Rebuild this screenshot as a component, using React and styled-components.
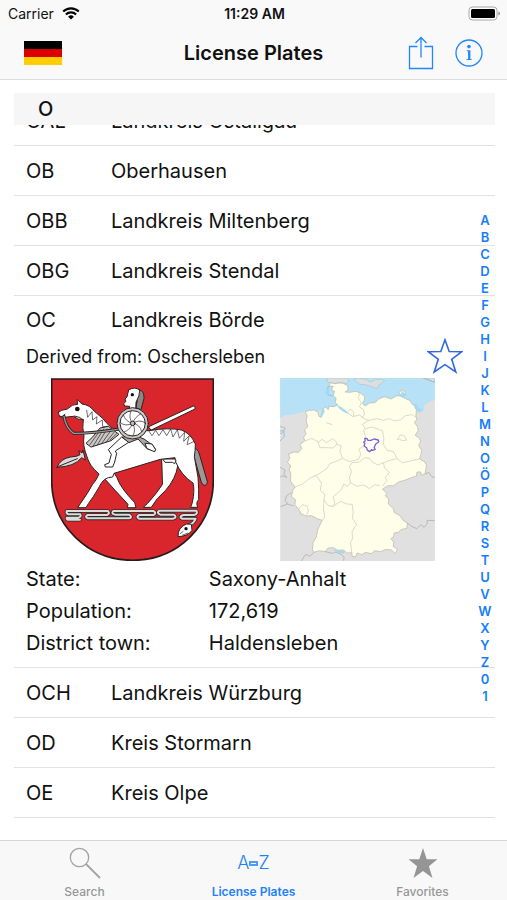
import React from 'react';
import styled, { createGlobalStyle, css } from 'styled-components';

const INDEX = 'ABCDEFGHIJKLMNOÖPQRSTUVWXYZ01'.split('');

const rowsBefore = [
  { code: 'OB', name: 'Oberhausen' },
  { code: 'OBB', name: 'Landkreis Miltenberg' },
  { code: 'OBG', name: 'Landkreis Stendal' },
];

const rowsAfter = [
  { code: 'OCH', name: 'Landkreis Würzburg' },
  { code: 'OD', name: 'Kreis Stormarn' },
  { code: 'OE', name: 'Kreis Olpe' },
];

const facts = [
  { label: 'State:', value: 'Saxony-Anhalt' },
  { label: 'Population:', value: '172,619' },
  { label: 'District town:', value: 'Haldensleben' },
];

const Plate = ({ code, name }) => (
  <PlateButton type="button">
    <Code>{code}</Code>
    <span>{name}</span>
  </PlateButton>
);

const App = () => {
  return (
    <Screen>
      <GlobalStyle />
      <Header>
        <StatusBar>
          <Carrier>
            Carrier
            <WifiIcon />
          </Carrier>
          <Clock>11:29 AM</Clock>
          <StatusRight>
            <BatteryIcon />
          </StatusRight>
        </StatusBar>
        <NavBar>
          <FlagButton type="button" aria-label="Country">
            <Stripe $color="#000" />
            <Stripe $color="#dd0000" />
            <Stripe $color="#ffce00" />
          </FlagButton>
          <Title>License Plates</Title>
          <NavActions>
            <IconButton type="button" aria-label="Share">
              <ShareIcon />
            </IconButton>
            <IconButton type="button" aria-label="Info">
              <InfoIcon />
            </IconButton>
          </NavActions>
        </NavBar>
      </Header>

      <Content>
        <SectionHeader>O</SectionHeader>
        <List>
          <ClippedItem>
            <Plate code="OAL" name="Landkreis Ostallgäu" />
          </ClippedItem>
          {rowsBefore.map((row) => (
            <Item key={row.code}>
              <Plate {...row} />
            </Item>
          ))}
          <Item>
            <OpenPlate type="button" aria-expanded="true">
              <Code>OC</Code>
              <span>Landkreis Börde</span>
            </OpenPlate>
            <Derived>
              <span>Derived from: Oschersleben</span>
              <IconButton type="button" aria-label="Add to favorites">
                <StarOutline />
              </IconButton>
            </Derived>
            <Figures>
              <Crest />
              <GermanyMap />
            </Figures>
            <Facts>
              {facts.map((fact) => (
                <React.Fragment key={fact.label}>
                  <dt>{fact.label}</dt>
                  <dd>{fact.value}</dd>
                </React.Fragment>
              ))}
            </Facts>
          </Item>
          {rowsAfter.map((row) => (
            <Item key={row.code}>
              <Plate {...row} />
            </Item>
          ))}
        </List>
        <IndexBar aria-label="Index">
          {INDEX.map((letter) => (
            <IndexLink key={letter} href={`#${letter}`}>{letter}</IndexLink>
          ))}
        </IndexBar>
      </Content>

      <TabBar>
        <Tab href="#search">
          <TabIcon><SearchIcon /></TabIcon>
          Search
        </Tab>
        <Tab href="#plates" $active>
          <TabIcon>
            <span>A</span>
            <Dash />
            <span>Z</span>
          </TabIcon>
          License Plates
        </Tab>
        <Tab href="#favorites">
          <TabIcon><StarFilled /></TabIcon>
          Favorites
        </Tab>
      </TabBar>
    </Screen>
  );
};

const WifiIcon = () => (
  <svg width="18" height="13" viewBox="0 0 18 13" fill="none" stroke="#000" strokeWidth="2.1">
    <path d="M1.2 4.6a11 11 0 0 1 15.6 0" />
    <path d="M3.9 7.5a7.2 7.2 0 0 1 10.2 0" />
    <path d="M9 12.6L6.1 9.7a4.1 4.1 0 0 1 5.8 0z" fill="#000" stroke="none" />
  </svg>
);

const BatteryIcon = () => (
  <svg width="33" height="15" viewBox="0 0 33 15">
    <rect x="1" y="1" width="28" height="13" rx="3.5" fill="#fff" stroke="#a5a5a5" />
    <rect x="3" y="3" width="24" height="9" rx="1.5" fill="#000" />
    <path d="M30.5 5.5c1.8.8 1.8 3.2 0 4z" fill="#777" />
  </svg>
);

const ShareIcon = () => (
  <svg width="26" height="34" viewBox="0 0 26 34" fill="none" stroke="#2187fb" strokeWidth="1.3">
    <path d="M9.5 10.5H1.5v22h23v-22h-8" />
    <path d="M13 21.5V2M7.5 7L13 1.5 18.5 7" />
  </svg>
);

const InfoIcon = () => (
  <svg width="28" height="28" viewBox="0 0 28 28" fill="none" stroke="#2187fb" strokeWidth="1.3">
    <circle cx="14" cy="14" r="13" />
    <g fill="#2187fb" stroke="none">
      <circle cx="14" cy="7.6" r="1.8" />
      <path d="M11.7 11.2h3.7v8.8h1.2v1h-5v-1h1.5v-7.8h-1.4z" />
    </g>
  </svg>
);

const StarOutline = () => (
  <svg width="36" height="36" viewBox="0 0 36 36" fill="none" stroke="#2f68e0" strokeWidth="1.6">
    <path d="M18 1.8L22.2 13.5 34.5 13.8 24.7 21.3 28.8 34 18 26.6 7.2 34 11.3 21.3 1.5 13.8 13.8 13.5z" />
  </svg>
);

const StarFilled = () => (
  <svg width="30" height="30" viewBox="0 0 30 30" fill="#959595">
    <path d="M15 0l3.7 11.2H29.5l-8.6 7L24.5 30 15 23 5.5 30l3.6-11.8-8.6-7h10.8z" />
  </svg>
);

const SearchIcon = () => (
  <svg width="32" height="32" viewBox="0 0 32 32" fill="none" stroke="#a3a3a3">
    <circle cx="10.5" cy="10.5" r="9.2" strokeWidth="1.3" />
    <path d="M17 17L31 31" strokeWidth="1.8" />
  </svg>
);

const Crest = () => (
  <svg width="163" height="183" viewBox="33 24 489 549" role="img" aria-label="Coat of arms">
    <path d="M35 27H520V330C520 470 410 571 278 571S35 470 35 330z" fill="#d9262c" stroke="#261b1c" strokeWidth="5" />
    <g fill="#fff" stroke="#2b2324" strokeWidth="3" strokeLinejoin="round" strokeLinecap="round">
      {/* spear */}
      <path d="M326 170L460 108Q468 109 465 117L334 180z" />
      <path d="M51 292Q62 265 92 261Q112 260 120 254L116 242L126 249L129 240L136 270L125 263Q104 290 51 292z" fill="#dcdada" />
      <path d="M56 289L112 266" />
      {/* tail */}
      <path d="M455 237Q472 228 479 255L502 335Q501 347 491 346L484 337L462 260z" fill="#9c9898" />
      {/* far legs */}
      <path d="M190 315L222 308L231 323Q240 352 284 398L288 413H262L264 403Q224 360 190 322z" />
      <path d="M366 267H412L413 288Q408 325 376 362Q350 383 334 412H310L323 400Q350 370 367 344z" />
      {/* body and head */}
      <path d="M55 127L65 121L82 117Q98 101 113 103L111 88L126 102Q150 105 163 124L188 145Q213 179 238 182H327Q385 172 424 180Q452 190 466 222Q466 242 463 260L474 322Q477 360 476 389Q467 397 473 412H452L457 398Q465 360 459 339Q424 316 407 276L405 263L361 268L222 310L218 321Q190 321 178 350Q160 382 145 401L138 413H113L121 401Q144 369 157 344Q170 330 177 312Q148 287 141 260Q127 225 132 199Q126 172 130 148Q113 151 101 139L80 141L65 143Q54 137 55 127z" />
      <circle cx="112" cy="117" r="7" fill="#111" stroke="none" />
      <path d="M58 139Q68 144 75 133M104 138Q122 140 130 151" fill="none" />
      {/* mane and back pattern */}
      <path d="M140 121L143 142L156 125L158 150L171 140L169 162L187 150L188 170L203 169" fill="none" strokeWidth="2" />
      <path d="M326 182L336 197L347 181L357 197L369 179L380 197L392 177L399 201L412 179L418 205L434 187L431 214L448 197L441 224L461 215" fill="none" strokeWidth="2" />
      <path d="M139 219Q158 204 180 174L205 169L237 193L213 212L154 231z" fill="#c9c6c6" />
      <path d="M149 225L181 180M160 227L191 177M172 225L201 177M184 222L211 184M197 218L222 187M211 209L230 191" fill="none" strokeWidth="2" />
      {/* reins */}
      <path d="M72 139Q77 173 101 190Q151 191 233 178" fill="none" strokeWidth="9" />
      <path d="M72 139Q77 173 101 190Q151 191 233 178" fill="none" stroke="#999" strokeWidth="4" />
      {/* rider */}
      <path d="M244 202L205 239L214 253L207 279L194 284L196 291H218L224 276L230 250L226 243L266 217z" />
      <path d="M247 202L267 218L294 207L321 236L345 244Q349 238 337 225L312 207L289 198z" fill="#aaa6a6" />
      <path d="M316 220L336 222L347 239L343 245L322 236z" />
      <path d="M298 59Q313 63 312 85L303 119L289 114z" fill="#8c8888" />
      <path d="M267 59Q285 49 299 60Q300 76 288 97L287 121H267L269 109L254 108L251 101L258 94L255 87L260 82z" />
      <circle cx="277" cy="74" r="5" fill="#111" stroke="none" />
      {/* shield */}
      <circle cx="278" cy="160" r="47" fill="#c9c7c7" />
      <circle cx="278" cy="160" r="38" />
      <path d="M278 160Q264 145 273 123M278 160Q284 140 302 132M278 160Q297 147 315 158M278 160Q301 163 305 185M278 160Q290 180 278 198M278 160Q271 180 252 186M278 160Q256 171 241 158M278 160Q256 155 250 135" fill="none" strokeWidth="2" />
      <circle cx="278" cy="160" r="7" fill="#bbb" />
      {/* belly */}
      <path d="M370 270L375 277H397L404 281L408 272" />
    </g>
    {/* ground ornament */}
    <g fill="none" strokeLinecap="round" strokeLinejoin="round">
      <path d="M120 449H85Q79 448 80 443H114Q125 441 121 433H85Q78 430 80 423H204Q211 431 201 435H143Q133 440 143 445H268Q278 442 268 434H225Q212 430 220 423H340Q351 428 341 435H298Q287 441 297 446H400Q413 441 401 434H361Q348 429 358 422H469Q475 431 462 435H430Q415 440 426 446H467Q461 461 447 465" stroke="#30292a" strokeWidth="11" />
      <path d="M120 449H85Q79 448 80 443H114Q125 441 121 433H85Q78 430 80 423H204Q211 431 201 435H143Q133 440 143 445H268Q278 442 268 434H225Q212 430 220 423H340Q351 428 341 435H298Q287 441 297 446H400Q413 441 401 434H361Q348 429 358 422H469Q475 431 462 435H430Q415 440 426 446H467Q461 461 447 465" stroke="#d9dddb" strokeWidth="6" />
    </g>
    <path d="M454 463L456 481Q444 499 414 500Q413 473 439 462z" fill="#fff" stroke="#2b2324" strokeWidth="3" />
    <circle cx="438" cy="476" r="5" fill="#111" />
    <path d="M420 491L430 484M426 496L444 489" stroke="#222" strokeWidth="2" />
  </svg>
);

const GermanyMap = () => (
  <svg width="155" height="183" viewBox="31 26 464 549" role="img" aria-label="Map of Germany">
    <path d="M31 26H495V575H31z" fill="#e0e0e0" />
    <path d="M31 26H495V92L478 98 464 107 461 124 447 130 438 118 420 125H110L84 132 65 136 44 138 31 146z" fill="#b7e1f7" />
    <path d="M169 26L174 39 191 43 210 40 229 43 238 35 231 26zM251 29L267 26 290 30 302 39 315 31 336 29 344 36 328 46 322 58 305 52 286 46 270 45zM458 26H495V38L482 35z" fill="#dedede" stroke="#9cc9dc" strokeWidth="2" />
    <path
      d="M106 128L118 123 133 122 144 129 147 141 154 144 159 132 158 119 168 113 175 121 177 111 192 112 204 107 196 99 199 87 190 79 194 66 185 62 190 51 178 50 181 40 195 43 207 41 220 42 234 49 234 63 226 68 242 69 258 66 272 71 284 81 284 92 277 102 286 110 299 101 316 100 325 90 344 82 364 89 378 80 394 79 387 69 399 62 408 70 406 80 395 81 407 88 420 93 427 105 437 108 440 122 438 140 441 150 434 160 443 172 445 184 436 198 449 207 452 217 446 229 456 242 453 256 449 269 464 277 470 288 467 304 466 314 455 318 451 307 441 309 440 320 421 326 407 332 386 338 371 349 355 349 338 359 351 372 346 379 357 389 355 403 370 417 374 430 389 438 402 455 413 461 411 477 393 481 386 489 373 491 371 503 363 508 372 518 370 531 383 540 376 553 364 541 344 541 333 547 315 544 304 553 287 549 276 556 263 551 256 563 247 561 246 550 231 551 222 542 204 543 190 535 175 536 166 547 148 544 132 549 128 541 130 519 140 502 143 482 157 453 142 448 125 439 109 440 94 434 86 419 75 406 77 391 65 382 69 362 76 353 62 336 63 314 58 300 63 290 53 279 60 267 56 254 72 248 86 249 96 237 90 226 105 214 101 204 109 193 104 182 114 171 109 156 112 139z"
      fill="#fefee9"
      stroke="#b5b4a8"
      strokeWidth="2"
    />
    <g fill="none" stroke="#c9c8bd" strokeWidth="2">
      <path d="M204 110L218 116 233 130 249 142 269 137 285 149 297 153M286 178L281 182 290 211 281 230 267 240 273 255 266 270 240 277 218 267 210 246 214 229 202 225 189 236 170 235 150 235 144 217 125 207 104 216" />
      <path d="M233 130L241 119 250 126 252 141M270 72L265 85 274 100 269 113 281 121 284 135 276 147M297 153L322 148 341 153 357 148 375 155 393 151 407 139 425 136 438 143" />
      <path d="M297 153L278 165 286 178 306 173 338 184 342 207 341 226 352 243 371 247 382 268 398 280 427 274 449 269M382 268L363 272 341 280 344 296 359 309 346 324 352 333 338 350M341 280L324 287 307 278 299 267 284 265 269 278 247 280 239 291 245 307 239 323 242 340 233 351 222 344 215 360 200 374 190 382 195 401 188 412 174 408 162 391 165 375 151 363 155 342 139 318 153 310 172 297 180 283 204 274 218 267" />
      <path d="M242 340L261 351 282 347 299 358 314 346 330 349M76 353L98 344 120 326 139 318M162 391L161 422 165 442 157 453M188 412L212 396 231 404 247 405 250 428 248 448 260 465 247 486 248 508 242 519 246 550M86 419L98 406 112 411 116 425 109 438M382 211L392 196 403 199 411 212 397 214 388 209zM145 220L157 210 170 220 188 208 198 216 202 225M169 160L187 166" />
    </g>
    <g fill="none" stroke="#a6a6a6" strokeWidth="2">
      <path d="M31 294L46 302 42 314 51 324 36 319 31 325M65 370L50 379 46 393 53 404 32 412M53 404L71 410M466 314L477 309 486 322 495 325M413 461L425 471 441 478 453 466 463 474 472 463 472 453 495 454M95 575L107 555 120 561 132 549M166 547L188 552 198 548 214 555 223 564 221 574M463 26L495 39M31 171L47 177 36 192 31 192" />
    </g>
    <path d="M187 540L207 545 218 543 225 549 222 553 205 550zM160 118L165 126 156 143 151 146 153 130zM201 105L215 116 229 125 239 135 223 129 207 117zM174 47L179 67 173 80 166 72zM431 107L441 104 447 116 459 121 448 130 436 119zM397 65L408 75 403 87 391 82z" fill="#a4daf2" />
    <path d="M180 51L171 57M190 80L174 76M31 185L42 184 43 202 31 215" fill="none" stroke="#88c8df" strokeWidth="3" />
    <path d="M285 207L292 208 294 213H303L313 209 325 212 327 217 317 225 313 235 316 240 308 243 305 241 299 247 292 242 291 236 283 230 285 222 281 219 286 215z" fill="#fffffa" stroke="#7563dd" strokeWidth="4" strokeLinejoin="round" />
  </svg>
);

const GlobalStyle = createGlobalStyle`
  body {
    margin: 0;
    background: #fff;
    color: #111;
    font-family: Inter, "Liberation Sans", sans-serif;
  }

  button {
    border: 0;
    padding: 0;
    background: none;
    color: inherit;
    font: inherit;
    cursor: pointer;
  }

  a {
    text-decoration: none;
  }

  svg {
    display: block;
  }
`;

const Screen = styled.div`
  display: flex;
  flex-direction: column;
  min-height: 100vh;
`;

const Header = styled.header`
  background: #f9f9f9;
  border-bottom: 1px solid #dcdcdc;
`;

const StatusBar = styled.div`
  display: grid;
  grid-template-columns: 1fr auto 1fr;
  align-items: center;
  height: 27px;
  padding: 0 6px 0 8px;
  font-size: 14px;
`;

const Carrier = styled.span`
  display: flex;
  align-items: center;
  gap: 8px;
`;

const Clock = styled.time`
  font-weight: 600;
`;

const StatusRight = styled.span`
  justify-self: end;
`;

const NavBar = styled.div`
  display: grid;
  grid-template-columns: 1fr auto 1fr;
  align-items: center;
  height: 52px;
  padding: 0 24px;
`;

const FlagButton = styled.button`
  display: flex;
  flex-direction: column;
  width: 38px;
  height: 24px;
`;

const Stripe = styled.span`
  flex: 1;
  width: 100%;
  background: ${(props) => props.$color};
`;

const Title = styled.h1`
  margin: 0;
  font-size: 20px;
  font-weight: 600;
`;

const NavActions = styled.div`
  display: flex;
  justify-self: end;
  align-items: center;
  gap: 21px;
`;

const IconButton = styled.button`
  flex: none;
`;

const Content = styled.main`
  position: relative;
  flex: 1;
  padding: 13px 12px 20px 14px;
`;

const SectionHeader = styled.h2`
  margin: 0;
  padding: 0 24px;
  background: #f6f6f6;
  font-size: 20px;
  font-weight: 500;
  line-height: 32px;
`;

const List = styled.ul`
  margin: 0;
  padding: 0;
  list-style: none;
`;

const Item = styled.li`
  border-bottom: 1px solid #e2e2e4;
`;

/* row that has scrolled halfway under the section header */
const ClippedItem = styled(Item)`
  display: flex;
  align-items: flex-end;
  height: 20px;
  overflow: hidden;
`;

const PlateButton = styled.button`
  display: flex;
  flex: none;
  align-items: center;
  width: 100%;
  height: 49px;
  padding: 0 12px;
  font-size: 20px;
  text-align: left;
`;

const OpenPlate = styled(PlateButton)`
  height: 42px;
  padding-top: 6px;
`;

const Code = styled.span`
  width: 85px;
`;

const Derived = styled.div`
  display: flex;
  align-items: center;
  justify-content: space-between;
  height: 36px;
  padding: 0 32px 0 12px;
  font-size: 18px;
`;

const Figures = styled.div`
  display: grid;
  grid-template-columns: 1fr 1fr;
  justify-items: center;
  padding: 4px 25px 0 6px;
`;

const Facts = styled.dl`
  display: grid;
  grid-template-columns: 2fr 3fr;
  margin: 0;
  padding: 2px 12px 8px;
  font-size: 20px;
  line-height: 32px;

  dd {
    margin: 0;
  }
`;

const IndexBar = styled.nav`
  position: absolute;
  top: 0;
  right: 12px;
  bottom: 4px;
  display: flex;
  flex-direction: column;
  justify-content: center;
  width: 20px;
`;

const IndexLink = styled.a`
  color: #167efb;
  font-size: 13px;
  font-weight: 600;
  line-height: 17px;
  text-align: center;
`;

const TabBar = styled.nav`
  display: grid;
  grid-template-columns: repeat(3, 1fr);
  height: 59px;
  background: #f8f8f8;
  border-top: 1px solid #d6d6d6;
`;

const Tab = styled.a`
  display: flex;
  flex-direction: column;
  align-items: center;
  color: #979797;
  font-size: 12px;
  font-weight: 500;
  line-height: 14px;

  ${(props) => props.$active && css`
    color: #1d82fb;
    font-weight: 600;
  `}
`;

const TabIcon = styled.span`
  display: flex;
  align-items: center;
  justify-content: center;
  height: 44px;
  font-size: 18px;
  font-weight: 300;
`;

const Dash = styled.span`
  width: 5px;
  height: 1px;
  border: 2px solid #4c9dfa;
`;

export default App;
